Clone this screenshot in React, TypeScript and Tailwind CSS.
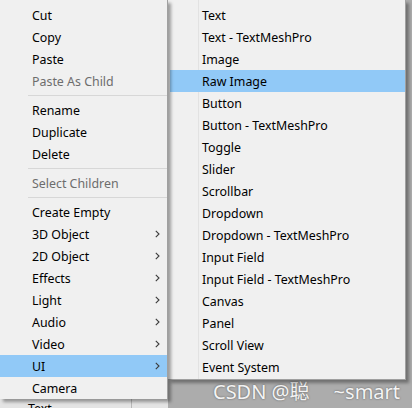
import clsx from 'clsx';

type Item = { label: string; sub?: boolean; disabled?: boolean; active?: boolean } | 'sep';

const mainItems: Item[] = [
  { label: 'Cut' },
  { label: 'Copy' },
  { label: 'Paste' },
  { label: 'Paste As Child', disabled: true },
  'sep',
  { label: 'Rename' },
  { label: 'Duplicate' },
  { label: 'Delete' },
  'sep',
  { label: 'Select Children', disabled: true },
  'sep',
  { label: 'Create Empty' },
  { label: '3D Object', sub: true },
  { label: '2D Object', sub: true },
  { label: 'Effects', sub: true },
  { label: 'Light', sub: true },
  { label: 'Audio', sub: true },
  { label: 'Video', sub: true },
  { label: 'UI', sub: true, active: true },
  { label: 'Camera' },
];

const uiItems = [
  'Text',
  'Text - TextMeshPro',
  'Image',
  'Raw Image',
  'Button',
  'Button - TextMeshPro',
  'Toggle',
  'Slider',
  'Scrollbar',
  'Dropdown',
  'Dropdown - TextMeshPro',
  'Input Field',
  'Input Field - TextMeshPro',
  'Canvas',
  'Panel',
  'Scroll View',
  'Event System',
];

function Chevron() {
  return (
    <svg width="5" height="8" viewBox="0 0 5 8" className="text-[#3c3c3c]">
      <path d="M0.8 0.8 L4 4 L0.8 7.2" fill="none" stroke="currentColor" strokeWidth="1.1" />
    </svg>
  );
}

export default function App() {
  return (
    <div
      className="w-[412px] h-[408px] overflow-hidden bg-[#acacac] flex items-start"
      style={{ fontFamily: '"Noto Sans", "Noto Sans CJK SC", sans-serif' }}
    >
      {/* main context menu */}
      <div className="w-[168px] flex flex-col">
        <div className="relative z-10 bg-[#f0f0f0] border-r border-[#a0a0a0] pt-[4px] shadow-[3px_3px_3px_rgba(0,0,0,0.35)]">
          {mainItems.map((it, i) =>
            it === 'sep' ? (
              <div key={i} className="h-[7px] flex items-center pl-[28px]">
                <div className="h-px w-full bg-[#d7d7d7]" />
              </div>
            ) : (
              <div
                key={i}
                className={clsx(
                  'h-[22px] flex items-center pl-[32px] pr-[7px] text-[12.4px]',
                  it.active && 'bg-[#91c9f7]',
                  it.disabled ? 'text-[#6d6d6d]' : 'text-black'
                )}
              >
                <span className="flex-1 leading-none pt-[2px]">{it.label}</span>
                {it.sub && <Chevron />}
              </div>
            )
          )}
        </div>
        <div className="h-[12px] bg-[#e4e4e4] flex overflow-hidden">
          <div className="w-[132px] border-r border-[#b8b8b8] pl-[28px] pt-[4px] text-[12.4px] leading-none text-black">
            Text
          </div>
        </div>
      </div>

      {/* UI submenu */}
      <div className="flex flex-col">
        <div className="relative w-[238px] bg-[#f0f0f0] border-r border-b border-[#a0a0a0] pt-[4px] pl-[2px] pb-[1px] shadow-[3px_3px_3px_rgba(0,0,0,0.35)]">
          <div className="absolute left-[30px] top-0 bottom-0 w-px bg-[#e2e2e2]" />
          {uiItems.map((label) => (
            <div
              key={label}
              className={clsx(
                'relative h-[22px] flex items-center pl-[32px] text-[12.4px] text-black',
                label === 'Raw Image' && 'bg-[#91c9f7]'
              )}
            >
              <span className="leading-none pt-[2px]">{label}</span>
            </div>
          ))}
        </div>
        <div className="flex gap-[24px] pl-[45px] pt-[2px] text-[20px] leading-none text-[#f4f4f4] [text-shadow:0_0_2px_rgba(0,0,0,0.5)]">
          <span>CSDN @聪</span>
          <span>~smart</span>
        </div>
      </div>
    </div>
  );
}
